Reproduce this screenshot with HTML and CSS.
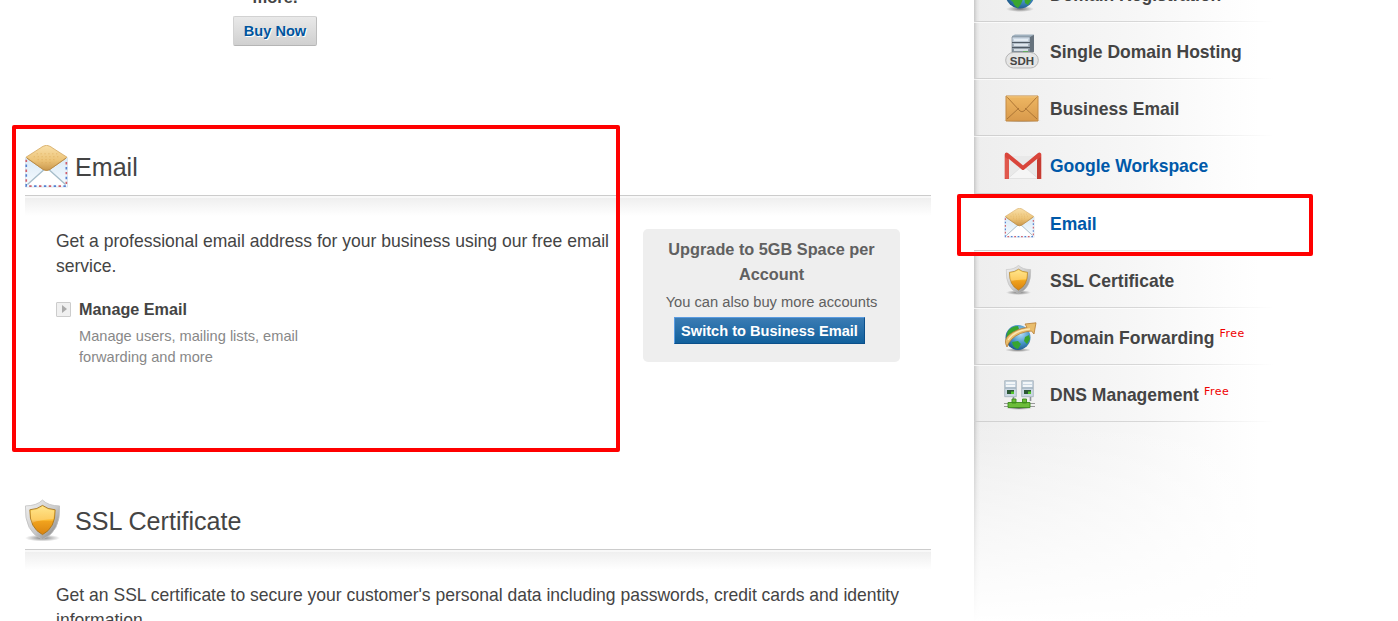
FILE: index.html
```html
<!DOCTYPE html>
<html lang="en">

<head>
    <meta charset="UTF-8">
    <meta name="viewport" content="width=device-width, initial-scale=1.0">
    <title>Manage Order</title>
    <link rel="stylesheet" href="styles.css">
</head>

<body>
    <!-- shared icons -->
    <svg class="defs" width="0" height="0">
        <defs>
            <linearGradient id="flap" x1="0" y1="0" x2="0" y2="1">
                <stop offset="0" stop-color="#f9e0a9"/><stop offset=".6" stop-color="#ecc377"/><stop offset="1" stop-color="#c9974c"/>
            </linearGradient>
            <linearGradient id="paper" x1="0" y1="0" x2="0" y2="1">
                <stop offset="0" stop-color="#d9e9f6"/><stop offset="1" stop-color="#f8fcff"/>
            </linearGradient>
            <linearGradient id="silver" x1="0" y1="0" x2="1" y2="1">
                <stop offset="0" stop-color="#f4f4f4"/><stop offset=".55" stop-color="#c9c9c9"/><stop offset="1" stop-color="#777"/>
            </linearGradient>
            <linearGradient id="gold" x1="0" y1="0" x2="0" y2="1">
                <stop offset="0" stop-color="#ffe070"/><stop offset=".5" stop-color="#fdbe35"/><stop offset=".55" stop-color="#f0a21d"/><stop offset="1" stop-color="#d98310"/>
            </linearGradient>
            <radialGradient id="sea" cx=".6" cy=".35" r=".7">
                <stop offset="0" stop-color="#b5e0f7"/><stop offset=".55" stop-color="#4694c9"/><stop offset="1" stop-color="#1b5586"/>
            </radialGradient>
            <linearGradient id="box" x1="0" y1="0" x2="0" y2="1">
                <stop offset="0" stop-color="#d6e2ee"/><stop offset="1" stop-color="#77838e"/>
            </linearGradient>
            <linearGradient id="kraft" x1="0" y1="0" x2="0" y2="1">
                <stop offset="0" stop-color="#eeb763"/><stop offset="1" stop-color="#d8994b"/>
            </linearGradient>
            <radialGradient id="shade">
                <stop offset="0" stop-color="#000" stop-opacity=".5"/><stop offset="1" stop-color="#000" stop-opacity="0"/>
            </radialGradient>
        </defs>
        <symbol id="icon-email" viewBox="0 0 44 44">
            <path d="M.5 13h43v30H.5z" fill="url(#paper)" stroke="#d3e0ea" stroke-width=".8"/>
            <path d="M1.300 15v27h41V15" fill="none" stroke="#d0606c" stroke-width="1.700" stroke-dasharray="2.500 7.500"/>
            <path d="M1.300 20v22h41V15" fill="none" stroke="#5580d0" stroke-width="1.700" stroke-dasharray="2.500 7.500"/>
            <path d="M2.500 40.500 18.500 26q3.500-2.500 7 0l16 14.500" fill="#fff" stroke="#a6bdca" stroke-width="1.400"/>
            <path d="M1 12.500 18.500 1.300q3.500-2 7 0L43 12.500 25.500 25q-3.500 2-7 0z" fill="url(#flap)" stroke="#d2a55d" stroke-width=".8"/>
            <path d="M2 13.500 18.500 25q3.500 2 7 0L42 13.500" fill="none" stroke="#b98a45" stroke-width="1"/>
            <path d="M12 9h22M9 12h27M13 15h19M17 18h12" stroke="#d8a24d" stroke-width=".9" stroke-dasharray="1 3" opacity=".7"/>
        </symbol>
        <symbol id="icon-shield" viewBox="0 0 38 43">
            <ellipse cx="19" cy="39.500" rx="18" ry="3.500" fill="url(#shade)"/>
            <path d="M19 .5Q25 6.500 36.500 6.500 38 33 19 41 0 33 1.500 6.500 13 6.500 19 .5z" fill="url(#silver)" stroke="#bdbdbd" stroke-width=".8"/>
            <path d="M19 6Q24 10 32 10.500 32.500 29 19 36 5.500 29 6 10.500 14 10 19 6z" fill="url(#gold)" stroke="#a8751b" stroke-width=".9"/>
            <path d="M19 7.500Q24 11 30.800 11.500q.2 5-1 8.500-12 .5-22 4-1-6-.6-12.500Q14 11 19 7.500z" fill="#fff" opacity=".22"/>
        </symbol>
        <symbol id="icon-globe" viewBox="0 0 32 34">
            <ellipse cx="16" cy="31" rx="14" ry="3" fill="url(#shade)"/>
            <circle cx="16" cy="16" r="14.500" fill="url(#sea)"/>
            <path d="M3 16q6 0 9 2l7 3-2 5-3 4q-4-2-5-6l-5-4zM20 18l7-2 2 3-5 8-3-2z" fill="#3aa62d"/>
        </symbol>
        <symbol id="icon-sdh" viewBox="0 0 34 35">
            <path d="M7 2 10 .5h19L26 4v17H7z" fill="#9fb0be"/>
            <path d="M7 3h18v17H7z" fill="url(#box)" stroke="#6c7883" stroke-width=".6"/>
            <path d="M25 3 29 .8v17L25 20z" fill="#66727d"/>
            <path d="M9 6h14M9 11h14M9 16h14" stroke="#eef5fa" stroke-width="1.700"/>
            <path d="M7 8.500h18M7 13.500h18" stroke="#4e5963" stroke-width="1"/>
            <path d="M18 17.500h5v2.500h-5z" fill="#42c527"/>
            <rect x=".7" y="18.500" width="32.600" height="15.500" rx="7.700" fill="#e5e5e5" stroke="#b5b5b5"/>
            <text x="17" y="30.500" class="sdh-text">SDH</text>
        </symbol>
        <symbol id="icon-business" viewBox="0 0 38 28">
            <ellipse cx="18" cy="25.500" rx="19" ry="2" fill="url(#shade)"/>
            <path d="M2 1h32v25H2z" fill="url(#kraft)" stroke="#c38a44"/>
            <path d="m3 24 12-11M33 24 21 13M3 2l13 14q2 1.600 4 0L33 2" fill="none" stroke="#ad7636" stroke-width="1"/>
            <path d="M3 1.800h30" stroke="#f7d28e" stroke-width=".8"/>
        </symbol>
        <symbol id="icon-gmail" viewBox="0 0 38 28">
            <path d="M4 4h30v22.500H4z" fill="#e9e9e9"/>
            <path d="m4 26.500 15-13 15 13z" fill="#f5f5f5" stroke="#d8d8d8" stroke-width=".6"/>
            <path d="M2.700 27V2.500L19 16 35.300 2.500V27" fill="none" stroke="#d9453b" stroke-width="4" stroke-linejoin="round"/>
            <path d="M1 5v20q0 2 2 2h2V8z" fill="#e0584d"/>
            <path d="M37 5v20q0 2-2 2h-2V8z" fill="#c43c32"/>
        </symbol>
        <symbol id="icon-forward" viewBox="0 0 33 30">
            <ellipse cx="14" cy="28" rx="13" ry="2" fill="url(#shade)"/>
            <circle cx="14" cy="15.500" r="12.500" fill="url(#sea)"/>
            <path d="M4 9q4-5 10-5l1 3-4 3-5 4-3 4q-1-5 1-9zM8 20l6-1 3 3-3 5q-5-1-6-7zM21 15l4-2 1 4-3 5-3-3z" fill="#37a52f"/>
            <path d="M3 25Q-1 18 5 13 12 7 23 5.500L21 2 32 .8 30 12 27.500 9Q15 10 8 17 4 21 3 25z" fill="#e9bd6c" stroke="#b67c35" stroke-width=".8"/>
            <path d="M4 18Q11 8 26 7" fill="none" stroke="#fae7b5" stroke-width="1.300"/>
        </symbol>
        <symbol id="icon-dns" viewBox="0 0 32 30">
            <g id="server">
                <path d="M.7.700h11.600v16H.7z" fill="#cbd8e3" stroke="#9aa7b1" stroke-width=".7"/>
                <path d="M2 3h9M2 6h9" stroke="#fff" stroke-width="1.600"/>
                <path d="M1 8h11" stroke="#8497a5" stroke-width=".8"/>
                <path d="M3 10h7v4H3z" fill="#2d5836"/>
                <path d="M7 11.500h3V14H7z" fill="#54c62c"/>
                <path d="M9.500 17v4" stroke="#8c9298" stroke-width="1.600"/>
            </g>
            <use href="#server" x="17"/>
            <path d="M0 23.500h31M0 26.500h31" stroke="#989898" stroke-width="1.200"/>
            <path d="M4 22.500h22v5H4zM8 19h4v4H8zM18.500 19h4v4h-4z" fill="#6dbd3a" stroke="#3b8a1b" stroke-width=".9"/>
            <ellipse cx="15" cy="28.500" rx="13" ry="1.300" fill="url(#shade)"/>
        </symbol>
    </svg>

    <div class="page">
        <div class="main">
            <div class="promo">
                <p>more.</p>
                <a href="#" class="btn-buy">Buy Now</a>
            </div>

            <div class="section" id="email">
                <h2><svg class="head-email"><use href="#icon-email"/></svg>Email</h2>
                <div class="section-body">
                    <div class="details">
                        <p class="intro">Get a professional email address for your business using our free email service.</p>
                        <div class="action">
                            <span class="arrow"></span>
                            <div>
                                <h3>Manage Email</h3>
                                <p>Manage users, mailing lists, email forwarding and more</p>
                            </div>
                        </div>
                    </div>
                    <div class="upgrade">
                        <h4>Upgrade to 5GB Space per Account</h4>
                        <p>You can also buy more accounts</p>
                        <a href="#" class="btn-switch">Switch to Business Email</a>
                    </div>
                </div>
            </div>

            <div class="section" id="ssl">
                <h2><svg class="head-shield"><use href="#icon-shield"/></svg>SSL Certificate</h2>
                <div class="section-body">
                    <p class="intro">Get an SSL certificate to secure your customer's personal data including passwords, credit cards and identity information.</p>
                </div>
            </div>
        </div>

        <div class="sidebar">
            <ul class="menu">
                <li><span class="ico"><svg width="32" height="34"><use href="#icon-globe"/></svg></span>Domain Registration</li>
                <li><span class="ico"><svg class="ico-sdh" width="34" height="35"><use href="#icon-sdh"/></svg></span>Single Domain Hosting</li>
                <li><span class="ico"><svg width="38" height="28"><use href="#icon-business"/></svg></span>Business Email</li>
                <li class="link"><span class="ico"><svg width="38" height="28"><use href="#icon-gmail"/></svg></span>Google Workspace</li>
                <li class="link active"><span class="ico"><svg width="31" height="30"><use href="#icon-email"/></svg></span>Email</li>
                <li><span class="ico"><svg class="ico-ssl" width="27" height="30"><use href="#icon-shield"/></svg></span>SSL Certificate</li>
                <li><span class="ico"><svg width="33" height="30"><use href="#icon-forward"/></svg></span>Domain Forwarding<sup>Free</sup></li>
                <li><span class="ico"><svg width="32" height="30"><use href="#icon-dns"/></svg></span>DNS Management<sup>Free</sup></li>
            </ul>
            <div class="fade"></div>
        </div>
    </div>

    <div class="highlight highlight-section"></div>
    <div class="highlight highlight-menu"></div>
</body>

</html>
```

FILE: styles.css
```css
* {
    box-sizing: border-box;
}

body {
    margin: 0;
    height: 621px;
    overflow: hidden;
    position: relative;
    background: #fff;
    color: #444;
    font-family: "Liberation Sans", Arial, sans-serif;
}

h2, h3, h4, p, ul {
    margin: 0;
    padding: 0;
}

a {
    text-decoration: none;
}

.defs {
    position: absolute;
}

.page {
    display: flex;
    height: 621px;
    overflow: hidden;
}

.main {
    width: 906px;
    margin-left: 25px;
    margin-right: 43px;
    flex: none;
}

/* top promo */
.promo {
    width: 500px;
    height: 156px;
    text-align: center;
}

.promo p {
    margin-top: -15px;
    line-height: 25px;
    font-size: 16.5px;
    font-weight: bold;
}

.btn-buy {
    display: inline-block;
    width: 84px;
    height: 30px;
    margin-top: 6px;
    border: 1px solid #d2d2d2;
    border-bottom-color: #b5b5b5;
    border-right-color: #bdbdbd;
    border-radius: 2px;
    background: linear-gradient(#e9e9e9, #d0d0d0);
    color: #00559d;
    font-size: 14.6px;
    font-weight: bold;
    line-height: 29px;
    text-shadow: 1px 1px 0 #fff;
}

/* sections */
.section {
    height: 354px;
}

.section h2 {
    display: flex;
    align-items: center;
    height: 55px;
    padding-bottom: 1px;
    border-bottom: 1px solid #ccc;
    font-size: 25.1px;
    font-weight: normal;
}

.head-email {
    width: 43px;
    height: 43px;
    margin: -2px 7px 0 0;
}

.head-shield {
    width: 37px;
    height: 43px;
    margin: -3px 14px 0 -1px;
}

.section-body {
    display: flex;
    padding: 33px 20px 0 31px;
    background: linear-gradient(#f8f8f8, #f8f8f8 2px, #efefef 2px, #fff 20px) no-repeat;
}

.details {
    width: 587px;
    flex: none;
}

.intro {
    font-size: 17.53px;
    line-height: 25px;
}

.details .intro {
    width: 560px;
}

.action {
    display: flex;
    margin-top: 19px;
}

.action h3 {
    font-size: 16.2px;
    line-height: 22px;
}

.action p {
    width: 240px;
    margin-top: 6px;
    color: #888;
    font-size: 14.6px;
    line-height: 21px;
}

.arrow {
    width: 15px;
    height: 15px;
    margin: 4px 8px 0 0;
    padding: 2px 0 0 5px;
    border: 1px solid #ccc;
    border-radius: 1px;
    background: #f0f0f0;
    flex: none;
}

.arrow::before {
    content: "";
    display: block;
    width: 0;
    border: 4px solid transparent;
    border-left: 5px solid #aaa;
    border-right: 0;
}

.upgrade {
    width: 257px;
    height: 133px;
    padding: 8px 20px;
    border-radius: 5px;
    background: #eee;
    color: #606060;
    text-align: center;
}

.upgrade h4 {
    font-size: 16.3px;
    line-height: 25px;
}

.upgrade p {
    margin: 4px -15px 0;
    font-size: 14.7px;
    line-height: 22px;
}

.btn-switch {
    display: block;
    width: 191px;
    height: 27px;
    margin: 4px 0 0 11px;
    border: 1px solid #0b4f8a;
    border-top-color: #5a9be0;
    border-left-color: #5a9be0;
    background: linear-gradient(#3b7cb4, #11609c);
    color: #fff;
    font-size: 14.6px;
    font-weight: bold;
    line-height: 26px;
    white-space: nowrap;
}

/* right menu */
.sidebar {
    width: 300px;
    flex: none;
}

.menu {
    margin-top: -35px;
    list-style: none;
}

.menu li {
    display: flex;
    align-items: center;
    height: 57.15px;
    padding-top: 4px;
    background:
        linear-gradient(90deg, #d0d0d0, #d8d8d8 60%, #fff) 0 100% / 100% 1px no-repeat,
        linear-gradient(90deg, #c8c8c8, #e4e4e4 3px, rgba(238, 238, 238, 0) 6px),
        linear-gradient(90deg, #eee, #f6f6f6 50%, #fff 95%);
    box-shadow: inset 0 1px 0 rgba(255, 255, 255, .7);
    font-size: 17.53px;
    font-weight: bold;
}

.menu .link {
    color: #0059a9;
}

.menu .active {
    background: linear-gradient(90deg, #ccc, #fff) 0 100% / 100% 1px no-repeat;
}

.ico {
    display: flex;
    width: 46px;
    margin: -2px 0 0 30px;
    flex: none;
}

.ico-sdh,
.ico-ssl {
    margin-left: 1px;
}

.sdh-text {
    font-size: 11.5px;
    font-weight: bold;
    fill: #444;
    text-anchor: middle;
}

.menu sup {
    margin: -8px 0 0 5px;
    color: #f00000;
    font-family: "DejaVu Sans", Verdana, sans-serif;
    font-size: 11px;
    font-weight: normal;
    letter-spacing: .5px;
    line-height: 12px;
}

.fade {
    height: 200px;
    background:
        linear-gradient(rgba(255, 255, 255, 0), #fff),
        linear-gradient(90deg, #c8c8c8, #e4e4e4 3px, rgba(238, 238, 238, 0) 6px),
        linear-gradient(90deg, #eee, #f6f6f6 50%, #fff 95%);
}

/* red frames */
.highlight {
    position: absolute;
    border: 4px solid #f00;
    border-radius: 2px;
}

.highlight-section {
    left: 12px;
    top: 125px;
    width: 608px;
    height: 327px;
}

.highlight-menu {
    left: 957px;
    top: 194px;
    width: 356px;
    height: 62px;
}
```
